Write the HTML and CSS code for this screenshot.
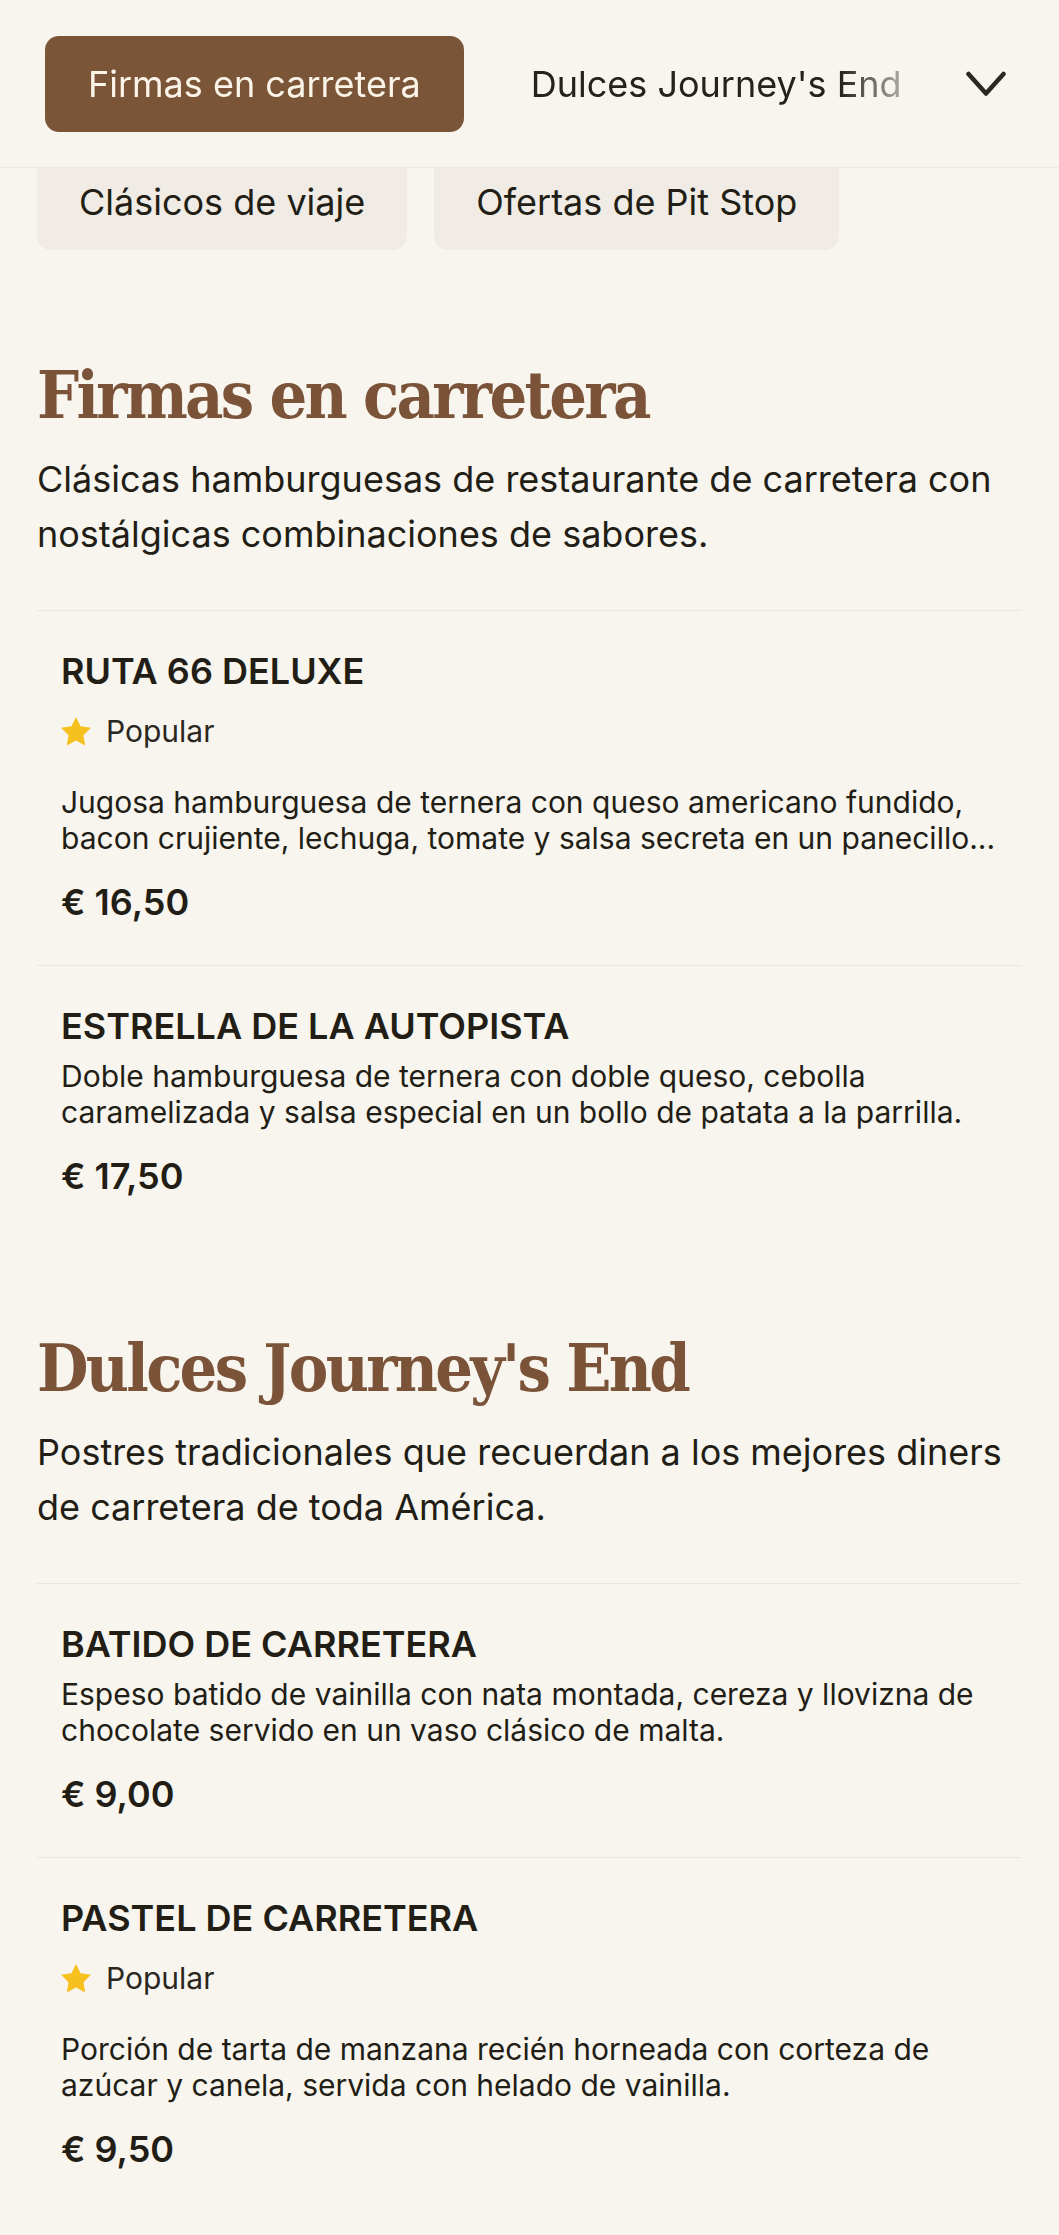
FILE: index.html
```html
<!DOCTYPE html>
<html lang="es">
<head>
<meta charset="utf-8">
<title>Menú</title>
<link rel="stylesheet" href="styles.css">
</head>
<body>
<header class="topbar">
  <nav class="tabs">
    <a class="tab tab-active">Firmas en carretera</a>
    <a class="tab">Dulces Journey's End</a>
  </nav>
  <button class="more" aria-label="Más categorías">
    <svg width="40" height="28" viewBox="0 0 40 28"><polyline points="2.5,4 20,23.5 37.5,4" fill="none" stroke="#2b2820" stroke-width="4.5" stroke-linecap="round" stroke-linejoin="round"/></svg>
  </button>
</header>
<div class="chips">
  <span class="chip">Clásicos de viaje</span>
  <span class="chip">Ofertas de Pit Stop</span>
</div>
<main class="menu">
  <section class="menu-section">
    <h2 class="section-title">Firmas en carretera</h2>
    <p class="section-desc">Clásicas hamburguesas de restaurante de carretera con nostálgicas combinaciones de sabores.</p>
    <ul class="items">
      <li class="item">
        <h3 class="item-name">RUTA 66 DELUXE</h3>
        <div class="badge"><svg class="star" width="30" height="29" viewBox="2 2 20 19.4"><polygon points="12 2 15.09 8.26 22 9.27 17 14.14 18.18 21.02 12 17.77 5.82 21.02 7 14.14 2 9.27 8.91 8.26 12 2" fill="#f6c11f"/></svg><span>Popular</span></div>
        <p class="item-desc">Jugosa hamburguesa de ternera con queso americano fundido, bacon crujiente, lechuga, tomate y salsa secreta en un panecillo...</p>
        <p class="price">€ 16,50</p>
      </li>
      <li class="item">
        <h3 class="item-name">ESTRELLA DE LA AUTOPISTA</h3>
        <p class="item-desc">Doble hamburguesa de ternera con doble queso, cebolla caramelizada y salsa especial en un bollo de patata a la parrilla.</p>
        <p class="price">€ 17,50</p>
      </li>
    </ul>
  </section>
  <section class="menu-section">
    <h2 class="section-title">Dulces Journey's End</h2>
    <p class="section-desc">Postres tradicionales que recuerdan a los mejores diners de carretera de toda América.</p>
    <ul class="items">
      <li class="item">
        <h3 class="item-name">BATIDO DE CARRETERA</h3>
        <p class="item-desc">Espeso batido de vainilla con nata montada, cereza y llovizna de chocolate servido en un vaso clásico de malta.</p>
        <p class="price">€ 9,00</p>
      </li>
      <li class="item">
        <h3 class="item-name">PASTEL DE CARRETERA</h3>
        <div class="badge"><svg class="star" width="30" height="29" viewBox="2 2 20 19.4"><polygon points="12 2 15.09 8.26 22 9.27 17 14.14 18.18 21.02 12 17.77 5.82 21.02 7 14.14 2 9.27 8.91 8.26 12 2" fill="#f6c11f"/></svg><span>Popular</span></div>
        <p class="item-desc">Porción de tarta de manzana recién horneada con corteza de azúcar y canela, servida con helado de vainilla.</p>
        <p class="price">€ 9,50</p>
      </li>
    </ul>
  </section>
</main>
</body>
</html>
```
FILE: styles.css
```css
html {
  background: #f8f5ef;
}
body {
  margin: 0;
  background: #f8f5ef;
  color: #221e15;
  font-family: Inter, "Noto Sans", sans-serif;
}

.topbar {
  position: relative;
  z-index: 2;
  height: 167px;
  display: flex;
  align-items: center;
  gap: 15px;
  padding: 0 37px 0 45px;
  background: #f8f5ef;
  border-bottom: 1px solid #eeeae3;
}
.tabs {
  flex: 1;
  min-width: 0;
  display: flex;
  gap: 24px;
  overflow: hidden;
  -webkit-mask-image: linear-gradient(to right, #000 calc(100% - 95px), transparent);
  mask-image: linear-gradient(to right, #000 calc(100% - 95px), transparent);
}
.tab {
  flex: none;
  padding: 21px 43px;
  font-size: 36px;
  line-height: 54px;
  color: #26221a;
  border-radius: 14px;
  white-space: nowrap;
}
.tab-active {
  background: #7b5538;
  color: #fbf4e8;
}
.more {
  flex: none;
  width: 72px;
  height: 72px;
  padding: 0;
  border: 0;
  background: none;
  display: flex;
  align-items: center;
  justify-content: center;
}

.chips {
  position: relative;
  z-index: 1;
  margin-top: -14px;
  display: flex;
  gap: 27px;
  padding: 0 37px;
}
.chip {
  padding: 21px 42px;
  font-size: 36px;
  line-height: 54px;
  background: #f0ebe4;
  border-radius: 14px;
  color: #221e15;
  white-space: nowrap;
}

.menu {
  padding: 0 37px;
}
.menu-section {
  padding-top: 106px;
}
.menu-section + .menu-section {
  padding-top: 90px;
}
.section-title {
  margin: 0;
  font-family: "DejaVu Serif Condensed", "DejaVu Serif", serif;
  font-stretch: condensed;
  font-weight: 700;
  font-size: 66px;
  line-height: 79px;
  letter-spacing: -2.7px;
  color: #7b5338;
}
.section-desc {
  margin: 17px 0 48px;
  font-size: 36px;
  line-height: 55px;
}
.items {
  list-style: none;
  margin: 0;
  padding: 0;
}
.item {
  display: flex;
  flex-direction: column;
  align-items: flex-start;
  border-top: 1px solid #ebe6de;
  padding: 37px 16px 39px 24px;
}
.item-name {
  margin: 0 0 8px;
  font-size: 36px;
  line-height: 47px;
  font-weight: 600;
}
.badge {
  display: flex;
  align-items: center;
  gap: 15px;
  margin: 10px 0 35px;
  font-size: 30px;
  line-height: 36px;
  color: #2b2720;
}
.star {
  flex: none;
}
.item-desc {
  margin: 0;
  font-size: 30px;
  line-height: 36px;
}
.price {
  margin: 23px 0 0;
  font-size: 36px;
  line-height: 47px;
  font-weight: 600;
}
```
